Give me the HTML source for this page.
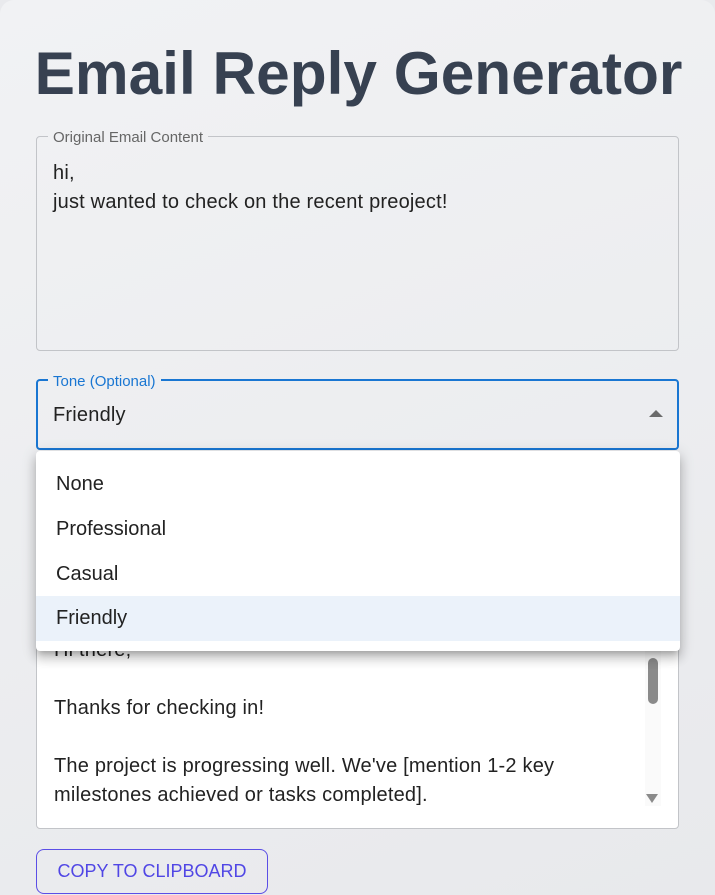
<!DOCTYPE html>
<html><head><meta charset="utf-8"><style>
*{box-sizing:border-box;margin:0;padding:0}
html,body{width:715px;height:895px;overflow:hidden}
body{background:#e9eaed;font-family:"Liberation Sans",Arial,sans-serif;position:relative}
.card{position:absolute;left:0;top:0;width:715px;height:900px;border-radius:14px 14px 0 0;background:linear-gradient(160deg,#f1f2f4,#e8e9ec);}
h1{position:absolute;left:0;width:717px;top:38px;text-align:center;font-size:60.4px;font-weight:bold;color:#374151;white-space:nowrap}
fieldset{position:absolute;border:1px solid #c2c4c8;border-radius:4px;padding:0 0 0 11px}
legend{font-size:15px;color:#666;padding:0 5px;line-height:14px}
legend span{position:relative;top:2px}
.t{position:absolute;font-size:20px;color:#222;line-height:29px;letter-spacing:0.2px}
.menu{position:absolute;left:36px;top:451px;width:644px;height:200px;background:#fff;border-radius:4px;box-shadow:0 5px 6px -3px rgba(0,0,0,.2),0 8px 10px 1px rgba(0,0,0,.14),0 3px 14px 2px rgba(0,0,0,.12);padding-top:11px}
.item{height:45px;line-height:45px;padding-left:20px;font-size:20px;color:#222}
.sel{background:#ebf2fa}
.out{position:absolute;left:36px;top:600px;width:643px;height:229px;background:#fff;border:1px solid #c2c4c8;border-radius:4px}
.btn{position:absolute;left:36px;top:849px;width:232px;height:45px;border:1px solid #5b4ee6;border-radius:8px;color:#5046e5;font-size:18px;text-align:center;line-height:43px}
</style></head><body>
<div class="card"></div>
<h1>Email Reply Generator</h1>
<fieldset style="left:36px;top:129px;width:643px;height:222px"><legend><span>Original Email Content</span></legend></fieldset>
<div class="t" style="left:53px;top:159px">hi,<br>just wanted to check on the recent preoject!</div>
<fieldset style="left:36px;top:373px;width:643px;height:77px;border:2px solid #1976d2;padding-left:10px"><legend style="color:#1976d2"><span>Tone (Optional)</span></legend></fieldset>
<div class="t" style="left:53px;top:401px">Friendly</div>
<svg style="position:absolute;left:649px;top:410px" width="14" height="8"><path d="M0 7L7 0L14 7Z" fill="#6b6b6b"/></svg>
<div class="out">
<div class="t" style="left:17px;top:35px;line-height:29px">Hi there,<br><br>Thanks for checking in!<br><br>The project is progressing well. We've [mention 1-2 key<br>milestones achieved or tasks completed].</div>
<div style="position:absolute;left:608px;top:50px;width:16px;height:155px;background:#fafafa"></div>
<div style="position:absolute;left:611px;top:57px;width:10px;height:46px;border-radius:5px;background:#8a8a8a"></div>
<svg style="position:absolute;left:609px;top:193px" width="12" height="9"><path d="M0 0H12L6 9Z" fill="#8a8a8a"/></svg>
</div>
<div class="menu">
<div class="item">None</div>
<div class="item">Professional</div>
<div class="item">Casual</div>
<div class="item sel" style="margin-top:-1px">Friendly</div>
</div>
<div class="btn">COPY TO CLIPBOARD</div>
</body></html>
